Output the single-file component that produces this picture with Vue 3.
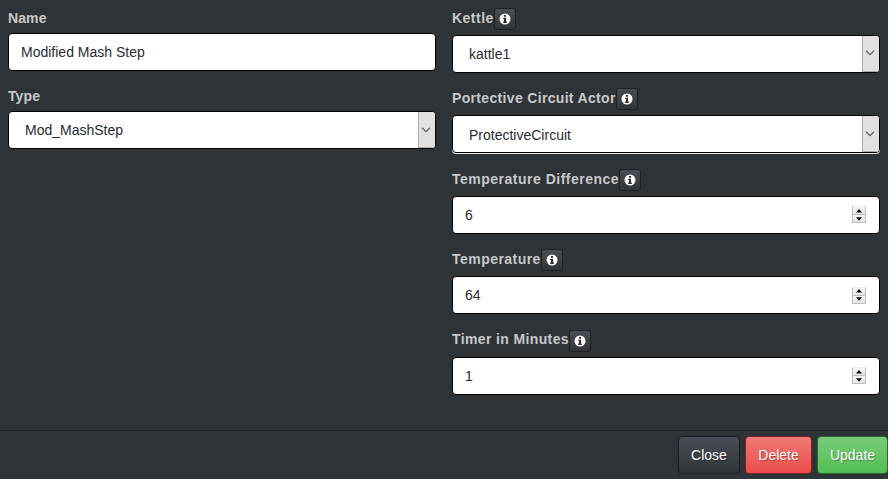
<script setup>
const leftFields = [
  { label: 'Name', kind: 'text', value: 'Modified Mash Step', tracking: 0.1 },
  { label: 'Type', kind: 'select', value: 'Mod_MashStep', tracking: 0.1 },
]
const rightFields = [
  { label: 'Kettle', kind: 'select', value: 'kattle1', tracking: 0.48 },
  { label: 'Portective Circuit Actor', kind: 'select', value: 'ProtectiveCircuit', tracking: 0.33, lit: true },
  { label: 'Temperature Difference', kind: 'number', value: '6', tracking: 0.5 },
  { label: 'Temperature', kind: 'number', value: '64', tracking: 0.46 },
  { label: 'Timer in Minutes', kind: 'number', value: '1', tracking: 0.375, raised: true },
]
const columns = [
  { name: 'plain', info: false, fields: leftFields },
  { name: 'detailed', info: true, fields: rightFields },
]
</script>

<template>
  <main class="dialog">
    <div class="body">
      <section v-for="col in columns" :key="col.name" :class="['column', col.name]">
        <div v-for="f in col.fields" :key="f.label" class="field">
          <div class="label-row">
            <label :class="['label', { raised: f.raised }]" :style="{ letterSpacing: f.tracking + 'px' }">{{ f.label }}</label>
            <button v-if="col.info" class="info" type="button">
              <svg width="12" height="12" viewBox="0 0 12 12">
                <circle cx="6" cy="6" r="5.5" fill="#fff" />
                <path d="M5 2h2v1.700H5zM4.200 4.700H7v3.900h.8V10H4.200V8.600H5V6h-.8z" fill="#2b2f34" />
              </svg>
            </button>
          </div>
          <div :class="['control', f.kind, { lit: f.lit }]">
            <span class="value">{{ f.value }}</span>
            <span v-if="f.kind === 'select'" class="arrow">
              <svg width="10" height="6" viewBox="0 0 10 6">
                <path d="M1 .8L5 4.700 9 .8" fill="none" stroke="#606060" stroke-width="1.300" />
              </svg>
            </span>
            <span v-if="f.kind === 'number'" class="spinner">
              <span class="spin up"><svg width="6" height="4" viewBox="0 0 6 4"><path d="M3 0L6 3.500H0z" /></svg></span>
              <span class="spin down"><svg width="6" height="4" viewBox="0 0 6 4"><path d="M0 .2H6L3 3.700z" /></svg></span>
            </span>
          </div>
        </div>
      </section>
    </div>
    <footer class="footer">
      <button class="btn close" type="button">Close</button>
      <button class="btn delete" type="button">Delete</button>
      <button class="btn update" type="button">Update</button>
    </footer>
  </main>
</template>

<style>
body {
  background: #2e3338;
}
</style>

<style scoped>
.dialog {
  width: 888px;
  height: 479px;
  box-sizing: border-box;
  display: flex;
  flex-direction: column;
  overflow: hidden;
  background: #2e3338;
  font: 14px/20px "Liberation Sans", Arial, sans-serif;
}
.dialog * {
  box-sizing: border-box;
}
.body {
  height: 430px;
  padding: 0 8px;
  display: grid;
  grid-template-columns: 428px 428px;
  column-gap: 16px;
}
.column {
  display: flex;
  flex-direction: column;
}
.plain {
  padding-top: 8px;
  gap: 15px;
}
.detailed {
  padding-top: 7.6px;
  gap: 15.5px;
}
.field {
  display: flex;
  flex-direction: column;
  gap: 5px;
}
.label-row {
  display: flex;
  height: 20px;
}
.detailed .label-row {
  height: 22px;
}
.label {
  font-weight: bold;
  color: #c8c8c8;
}
.label.raised {
  line-height: 18.5px;
}
.info {
  width: 22px;
  height: 22px;
  padding: 0;
  display: flex;
  align-items: center;
  justify-content: center;
  border: 1px solid #1d2024;
  border-radius: 3px;
  background: linear-gradient(#484e55, #3a3f44 60%, #313539);
}
.control {
  height: 38px;
  display: flex;
  align-items: center;
  border: 1px solid #000;
  border-radius: 4px;
  background: #fff;
  color: #272b30;
  padding-left: 12px;
  overflow: hidden;
}
.control.select {
  padding-left: 16px;
}
.control.lit {
  box-shadow: 0 1px 0 #e8e8e8;
}
.control.lit .value {
  padding-top: 1px;
}
.value {
  flex: 1;
}
.arrow {
  width: 17px;
  height: 36px;
  padding-right: 2px;
  display: flex;
  align-items: center;
  justify-content: center;
  background: #e1e1e1;
  border-left: 1px solid #adadad;
  border-bottom: 1px solid #adadad;
}
.spinner {
  width: 14px;
  height: 17px;
  margin-right: 13px;
  display: flex;
  flex-direction: column;
}
.spin {
  height: 9px;
  display: flex;
  align-items: center;
  justify-content: center;
  background: linear-gradient(#f4f4f4, #e6e6e6);
  border: 1px solid #bdbdbd;
}
.spin svg {
  display: block;
  fill: #000;
}
.up {
  border-top-color: #f0f0f0;
}
.down {
  height: 8px;
  border-top: 0;
}
.footer {
  flex: 1;
  display: flex;
  justify-content: flex-end;
  align-items: flex-start;
  gap: 5px;
  padding-top: 5px;
  border-top: 1px solid #1c1e22;
}
.btn {
  height: 38px;
  padding: 0;
  border: 1px solid #1a1c1f;
  border-radius: 4px;
  color: #fff;
  font: inherit;
  text-shadow: 1px 1px 1px rgba(0, 0, 0, 0.3);
}
.close {
  width: 62px;
  background: linear-gradient(#484e55, #3a3f44 60%, #313539);
}
.delete {
  width: 67px;
  background: linear-gradient(#f17a77, #ee5f5b 60%, #ec4d49);
  border-color: #7a2422;
}
.update {
  width: 71px;
  background: linear-gradient(#78cc78, #62c462 60%, #53be53);
  border-color: #2d6a2d;
}
</style>
